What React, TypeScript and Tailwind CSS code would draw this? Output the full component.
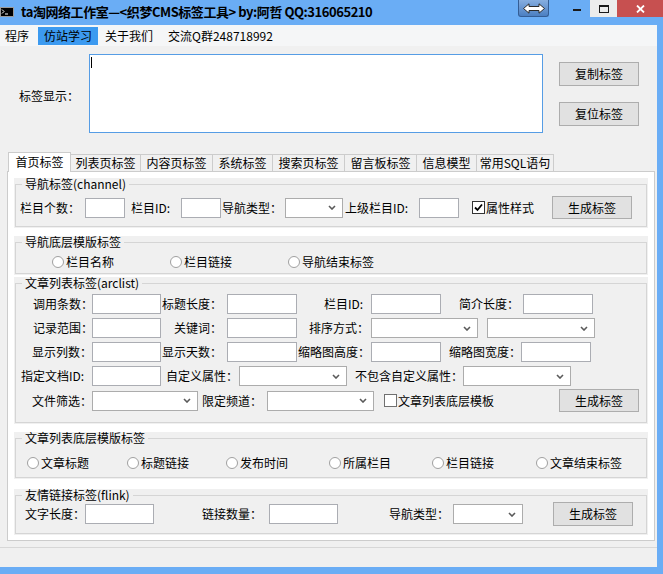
import type { ReactNode } from "react"

type Props = { children?: ReactNode; className?: string }

const Label = ({ children, className = "" }: Props) => (
  <span className={`shrink-0 whitespace-nowrap leading-[14px] ${className}`}>{children}</span>
)

const TextBox = ({ className = "" }: Props) => (
  <div className={`h-[20px] shrink-0 border border-[#abadb3] bg-white ${className}`} />
)

const Combo = ({ className = "" }: Props) => (
  <div className={`flex h-[20px] shrink-0 items-center justify-end border border-[#acacac] bg-white pr-[6px] ${className}`}>
    <svg width="8" height="5" viewBox="0 0 8 5">
      <path d="M1 1 L4 4 L7 1" fill="none" stroke="#5a5a5a" strokeWidth="1.6" />
    </svg>
  </div>
)

const Button = ({ children, className = "" }: Props) => (
  <button className={`flex w-[80px] shrink-0 items-center justify-center border border-[#adadad] bg-[#e1e1e1] leading-[14px] ${className}`}>
    {children}
  </button>
)

const CheckBox = ({ children, className = "", checked }: Props & { checked?: boolean }) => (
  <div className={`flex shrink-0 items-center ${className}`}>
    <span className={`flex h-[13px] w-[13px] items-center justify-center border bg-white ${checked ? "border-[#333333]" : "border-[#707070]"}`}>
      {checked && (
        <svg width="9" height="9" viewBox="0 0 9 9">
          <path d="M1 4.5 L3.5 7 L8 1.5" fill="none" stroke="#000" strokeWidth="1.8" />
        </svg>
      )}
    </span>
    <span className="ml-px whitespace-nowrap leading-[14px]">{children}</span>
  </div>
)

const Radio = ({ children, className = "" }: Props) => (
  <div className={`flex shrink-0 items-center ${className}`}>
    <span className="h-[12px] w-[12px] rounded-full border border-[#a0a0a0] bg-white" />
    <span className="ml-[2px] whitespace-nowrap leading-[14px]">{children}</span>
  </div>
)

const GroupBox = ({ title, className = "", innerClass = "", children }: Props & { title: string; innerClass?: string }) => (
  <div className={`relative mx-[6px] bg-[#f0f0f0] px-px pb-px pt-[6px] ${className}`}>
    <div className={`border border-[#d5d5d5] ${innerClass}`}>{children}</div>
    <span className="absolute left-[8px] top-0 bg-[#f0f0f0] px-[3px] leading-[12px]">{title}</span>
  </div>
)

const tabs = [
  { name: "首页标签", w: "w-[63px]" },
  { name: "列表页标签", w: "w-[70px]" },
  { name: "内容页标签", w: "w-[72px]" },
  { name: "系统标签", w: "w-[60px]" },
  { name: "搜索页标签", w: "w-[72px]" },
  { name: "留言板标签", w: "w-[72px]" },
  { name: "信息模型", w: "w-[60px]" },
  { name: "常用SQL语句", w: "w-[77px]" },
]

export default function App() {
  return (
    <div className="flex h-[574px] w-[663px] flex-col overflow-hidden bg-[#6aadf5] font-['Noto_Sans_CJK_SC',sans-serif] text-[12px] text-black">
      {/* Title bar */}
      <div className="flex h-[25px] shrink-0 items-start">
        <div className="mt-[7px] flex h-[10px] w-[14px] items-start border border-[#9a9a9a] bg-black">
          <svg width="12" height="8" viewBox="0 0 12 8">
            <path d="M1 1.5 L3 3.5 L1 5.5" fill="none" stroke="#fff" strokeWidth="1" />
            <path d="M4 6 H7" stroke="#fff" strokeWidth="1" />
          </svg>
        </div>
        <span className="ml-[7px] mt-[4px] whitespace-nowrap text-[13px] font-bold leading-[15px] tracking-[-0.45px]">
          ta淘网络工作室—&lt;织梦CMS标签工具&gt; by:阿哲 QQ:316065210
        </span>
        <div className="flex-1" />
        <div className="flex h-[17px] w-[31px] items-center justify-center rounded-b-[3px] border border-t-0 border-[#345d94] bg-gradient-to-b from-[#86aee0] to-[#4b7fc2]">
          <svg width="22" height="11" viewBox="0 0 22 11">
            <polygon points="0.5,5.5 6,0.8 6,3.5 16,3.5 16,0.8 21.5,5.5 16,10.2 16,7.5 6,7.5 6,10.2" fill="#fff" stroke="#2b2b2b" strokeWidth="1" />
          </svg>
        </div>
        <div className="ml-[14px] flex h-[17px] w-[27px] items-center justify-center">
          <div className="mt-[3px] h-[2px] w-[8px] bg-[#1a1a1a]" />
        </div>
        <div className="flex h-[17px] w-[27px] items-center justify-center bg-[#ececec]">
          <div className="h-[8px] w-[10px] border border-t-2 border-[#1a1a1a]" />
        </div>
        <div className="flex h-[17px] w-[46px] items-center justify-center bg-[#c75050]">
          <svg width="9" height="8" viewBox="0 0 9 8">
            <path d="M1 0.5 L8 7.5 M8 0.5 L1 7.5" stroke="#fff" strokeWidth="1.8" />
          </svg>
        </div>
      </div>

      {/* Client area */}
      <div className="mb-[7px] mr-[6px] flex flex-1 flex-col bg-[#f0f0f0]">
        {/* Menu */}
        <div className="flex h-[21px] shrink-0 items-center bg-[#f5f6f7]">
          <span className="ml-[5px] leading-[14px]">程序</span>
          <span className="ml-[9px] flex h-[18px] w-[60px] items-center justify-center bg-[#3c9af0] leading-[14px]">仿站学习</span>
          <span className="ml-[7px] leading-[14px]">关于我们</span>
          <span className="ml-[15px] leading-[14px]">交流Q群248718992</span>
        </div>

        {/* Tag display */}
        <div className="flex pt-[8px]">
          <div className="flex w-[89px] items-center pl-[19px] pt-[5px]">
            <Label>标签显示：</Label>
          </div>
          <div className="h-[79px] w-[454px] border border-[#569de5] bg-white">
            <div className="ml-px mt-[2px] h-[11px] w-px bg-black" />
          </div>
          <div className="ml-[16px] mt-[8px] flex flex-col gap-[16px]">
            <Button className="h-[24px]">复制标签</Button>
            <Button className="h-[24px]">复位标签</Button>
          </div>
        </div>

        {/* Tab control */}
        <div className="ml-[7px] mt-[19px] w-[648px]">
          <div className="flex h-[19px] items-end pl-px">
            {tabs.map((t, i) =>
              i === 0 ? (
                <div key={t.name} className={`relative z-10 -mb-px flex h-[20px] items-center justify-center border-x border-t border-[#cccccc] bg-white pb-[2px] leading-[14px] ${t.w}`}>
                  {t.name}
                </div>
              ) : (
                <div key={t.name} className={`flex h-[17px] items-center justify-center border-r border-t border-[#cccccc] bg-[#f0f0f0] pb-[1px] leading-[14px] ${t.w}`}>
                  {t.name}
                </div>
              )
            )}
          </div>

          <div className="border border-[#cccccc] bg-white pb-[5px] pt-[6px]">
            {/* channel */}
            <GroupBox title="导航标签(channel)" innerClass="pb-[7px] pt-[11px]">
              <div className="flex h-[23px] items-center">
                <Label className="ml-[4px] w-[65px]">栏目个数：</Label>
                <TextBox className="w-[40px]" />
                <Label className="ml-[6px] w-[50px]">栏目ID:</Label>
                <TextBox className="w-[40px]" />
                <Label className="ml-[1px] w-[63px]">导航类型：</Label>
                <Combo className="w-[58px]" />
                <Label className="ml-[2px] w-[74px]">上级栏目ID:</Label>
                <TextBox className="w-[40px]" />
                <CheckBox checked className="ml-[13px] w-[80px]">属性样式</CheckBox>
                <Button className="h-[23px]">生成标签</Button>
              </div>
            </GroupBox>

            {/* channel template */}
            <GroupBox title="导航底层模版标签" className="mt-[8px]" innerClass="pb-[3px] pt-[11px]">
              <div className="flex h-[16px] items-center">
                <Radio className="ml-[36px] w-[118px]">栏目名称</Radio>
                <Radio className="w-[118px]">栏目链接</Radio>
                <Radio>导航结束标签</Radio>
              </div>
            </GroupBox>

            {/* arclist */}
            <GroupBox title="文章列表标签(arclist)" className="mt-[2px]" innerClass="pb-[10px] pt-[10px]">
              <div className="flex h-[20px] items-center">
                <Label className="ml-[17px] w-[59px]">调用条数：</Label>
                <TextBox className="w-[69px]" />
                <Label className="ml-[1px] w-[65px]">标题长度：</Label>
                <TextBox className="w-[70px]" />
                <Label className="ml-[27px] w-[47px]">栏目ID:</Label>
                <TextBox className="w-[70px]" />
                <Label className="ml-[18px] w-[64px]">简介长度：</Label>
                <TextBox className="w-[70px]" />
              </div>
              <div className="mt-[4px] flex h-[20px] items-center">
                <Label className="ml-[17px] w-[59px]">记录范围：</Label>
                <TextBox className="w-[69px]" />
                <Label className="ml-[13px] w-[53px]">关键词：</Label>
                <TextBox className="w-[70px]" />
                <Label className="ml-[12px] w-[62px]">排序方式：</Label>
                <Combo className="w-[107px]" />
                <Combo className="ml-[9px] w-[108px]" />
              </div>
              <div className="mt-[4px] flex h-[20px] items-center">
                <Label className="ml-[16px] w-[60px]">显示列数：</Label>
                <TextBox className="w-[69px]" />
                <Label className="ml-[1px] w-[65px]">显示天数：</Label>
                <TextBox className="w-[70px]" />
                <Label className="ml-[1px] w-[73px]">缩略图高度：</Label>
                <TextBox className="w-[70px]" />
                <Label className="ml-[8px] w-[72px]">缩略图宽度：</Label>
                <TextBox className="w-[70px]" />
              </div>
              <div className="mt-[4px] flex h-[20px] items-center">
                <Label className="ml-[5px] w-[71px]">指定文档ID:</Label>
                <TextBox className="w-[69px]" />
                <Label className="ml-[5px] w-[73px]">自定义属性：</Label>
                <Combo className="w-[108px]" />
                <Label className="ml-[8px] w-[108px]">不包含自定义属性：</Label>
                <Combo className="w-[108px]" />
              </div>
              <div className="mt-[3px] flex h-[23px] items-center">
                <Label className="ml-[16px] w-[60px]">文件筛选：</Label>
                <Combo className="w-[106px]" />
                <Label className="ml-[4px] w-[65px]">限定频道：</Label>
                <Combo className="w-[107px]" />
                <CheckBox className="ml-[10px] w-[175px]">文章列表底层模板</CheckBox>
                <Button className="h-[23px]">生成标签</Button>
              </div>
            </GroupBox>

            {/* arclist template */}
            <GroupBox title="文章列表底层模版标签" className="mt-[8px]" innerClass="pb-[6px] pt-[16px]">
              <div className="flex h-[16px] items-center">
                <Radio className="ml-[11px] w-[100px]">文章标题</Radio>
                <Radio className="w-[99px]">标题链接</Radio>
                <Radio className="w-[103px]">发布时间</Radio>
                <Radio className="w-[103px]">所属栏目</Radio>
                <Radio className="w-[104px]">栏目链接</Radio>
                <Radio>文章结束标签</Radio>
              </div>
            </GroupBox>

            {/* flink */}
            <GroupBox title="友情链接标签(flink)" className="mt-[10px]" innerClass="pb-[7px] pt-[6px]">
              <div className="flex h-[24px] items-center">
                <Label className="ml-[9px] w-[60px]">文字长度：</Label>
                <TextBox className="w-[69px]" />
                <Label className="ml-[48px] w-[67px]">链接数量：</Label>
                <TextBox className="w-[69px]" />
                <Label className="ml-[51px] w-[64px]">导航类型：</Label>
                <Combo className="w-[70px]" />
                <Button className="ml-[30px] h-[24px]">生成标签</Button>
              </div>
            </GroupBox>
          </div>
        </div>

        {/* Status strip */}
        <div className="mt-[6px] flex-1 border-t border-[#d7d7d7]" />
      </div>
    </div>
  )
}
